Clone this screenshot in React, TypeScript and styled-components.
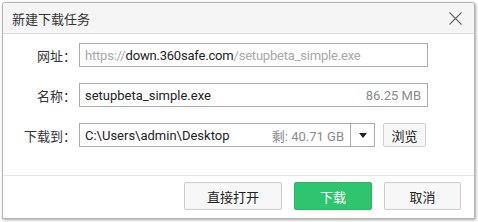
import React from 'react'
import styled, { createGlobalStyle } from 'styled-components'

const GlobalStyle = createGlobalStyle`
  html, body {
    margin: 0;
    padding: 0;
    background: #ffffff;
  }
  body {
    font-family: Roboto, 'Noto Sans CJK SC', sans-serif;
    font-size: 13px;
    color: #333;
  }
`

const Page = styled.div`
  padding: 2px 0 0 2px;
  width: 478px;
  height: 222px;
  box-sizing: border-box;
`

const Window = styled.div`
  width: 473px;
  height: 217px;
  box-sizing: border-box;
  border: 1px solid #b4b4b4;
  border-radius: 3px 3px 0 0;
  background: #fff;
  box-shadow: 1px 1px 3px rgba(0, 0, 0, 0.35);
  display: flex;
  flex-direction: column;
`

const TitleBar = styled.div`
  height: 30px;
  flex-shrink: 0;
  background: #f5f5f5;
  border-bottom: 1px solid #dcdcdc;
  border-radius: 3px 3px 0 0;
  display: flex;
  align-items: center;
  justify-content: space-between;
  padding: 0 12px 0 9px;
`

const Title = styled.span`
  font-family: 'Noto Sans CJK SC', sans-serif;
  font-size: 13px;
  color: #333;
`

const CloseButton = styled.button`
  border: none;
  background: none;
  padding: 0;
  width: 14px;
  height: 14px;
  display: flex;
  align-items: center;
  justify-content: center;
  cursor: pointer;
`

const Body = styled.div`
  flex: 1;
  padding: 9px 46px 0 0;
  display: flex;
  flex-direction: column;
  gap: 16px;
`

const Row = styled.div`
  display: flex;
  align-items: center;
  height: 24px;
`

const Label = styled.label`
  width: 76px;
  flex-shrink: 0;
  box-sizing: border-box;
  padding-right: 3px;
  text-align: right;
  font-family: 'Noto Sans CJK SC', sans-serif;
  font-size: 13px;
  color: #333;
`

const Field = styled.div<{ $tight?: boolean }>`
  flex: 1;
  height: 24px;
  box-sizing: border-box;
  border: 1px solid #aaaaaa;
  display: flex;
  align-items: center;
  padding: 0 6px 0 5px;
  font-size: 13px;
  letter-spacing: ${p => (p.$tight ? '-0.2px' : 'normal')};
  color: #222;
  white-space: nowrap;
  overflow: hidden;
`

const Grow = styled.span`
  flex: 1;
`

const Dim = styled.span`
  color: #a8a8a8;
`

const Meta = styled.span`
  color: #8a8a8a;
`

const Combo = styled.div`
  display: flex;
  width: 296px;
  height: 24px;
  box-sizing: border-box;
  border: 1px solid #aaaaaa;
`

const ComboText = styled.div`
  flex: 1;
  display: flex;
  align-items: center;
  padding: 0 6px 0 5px;
  color: #222;
  white-space: nowrap;
`

const ComboArrow = styled.div`
  width: 23px;
  border-left: 1px solid #aaaaaa;
  display: flex;
  align-items: center;
  justify-content: center;
`

const SmallButton = styled.button`
  margin-left: 8px;
  width: 43px;
  height: 24px;
  box-sizing: border-box;
  border: 1px solid #cfcfcf;
  border-radius: 2px;
  background: #f7f7f7;
  font-family: 'Noto Sans CJK SC', sans-serif;
  font-size: 13px;
  color: #222;
  padding: 0;
  cursor: pointer;
`

const Footer = styled.div`
  height: 43px;
  flex-shrink: 0;
  border-top: 1px solid #e6e6e6;
  display: flex;
  justify-content: flex-end;
  align-items: flex-start;
  gap: 12px;
  padding: 6px 13px 0 0;
  box-sizing: border-box;
`

const Button = styled.button<{ $primary?: boolean; $width: number }>`
  width: ${p => p.$width}px;
  height: 28px;
  box-sizing: border-box;
  border-radius: 2px;
  border: 1px solid ${p => (p.$primary ? '#26b862' : '#cccccc')};
  background: ${p => (p.$primary ? '#2fc46e' : '#f7f7f7')};
  color: ${p => (p.$primary ? '#ffffff' : '#222')};
  font-family: 'Noto Sans CJK SC', sans-serif;
  font-size: 13px;
  padding: 0;
  cursor: pointer;
`

export default function App() {
  return (
    <>
      <GlobalStyle />
      <Page>
        <Window>
          <TitleBar>
            <Title>新建下载任务</Title>
            <CloseButton aria-label='关闭'>
              <svg width='13' height='13' viewBox='0 0 13 13'>
                <path d='M0.5 0.5 L12.5 12.5 M12.5 0.5 L0.5 12.5' stroke='#666' strokeWidth='1.1' fill='none' />
              </svg>
            </CloseButton>
          </TitleBar>
          <Body>
            <Row>
              <Label>网址：</Label>
              <Field $tight>
                <Dim>https://</Dim>down.360safe.com<Dim>/setupbeta_simple.exe</Dim>
              </Field>
            </Row>
            <Row>
              <Label>名称：</Label>
              <Field>
                <Grow>setupbeta_simple.exe</Grow>
                <Meta>86.25 MB</Meta>
              </Field>
            </Row>
            <Row>
              <Label>下载到：</Label>
              <Combo>
                <ComboText>
                  <Grow>C:\Users\admin\Desktop</Grow>
                  <Meta>剩: 40.71 GB</Meta>
                </ComboText>
                <ComboArrow>
                  <svg width='8' height='5' viewBox='0 0 8 5'>
                    <path d='M0 0 L8 0 L4 5 Z' fill='#222' />
                  </svg>
                </ComboArrow>
              </Combo>
              <SmallButton>浏览</SmallButton>
            </Row>
          </Body>
          <Footer>
            <Button $width={98}>直接打开</Button>
            <Button $width={78} $primary>下载</Button>
            <Button $width={77}>取消</Button>
          </Footer>
        </Window>
      </Page>
    </>
  )
}
